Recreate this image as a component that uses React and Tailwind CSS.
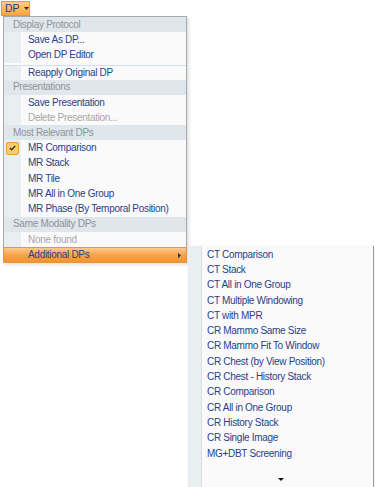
import React from "react";

const font = { fontFamily: '"Liberation Sans", Arial, sans-serif' };

const Header = ({ children }) => (
  <div className="h-[15px] flex items-center pl-[9px] bg-[#dfe6ec] text-[#8f9398] text-[10px] tracking-[-0.3px] leading-none">
    {children}
  </div>
);

const Item = ({ children, disabled, checked, separator }) => (
  <div className={`relative h-[15.3px] flex items-center ${separator ? "border-t border-[#d3dfec]" : ""}`}>
    <div className="w-[17px] h-full bg-[#e9eef1] flex items-center justify-center shrink-0">
      {checked && (
        <div className="w-[13px] h-[13px] rounded-[2px] border border-[#e3a03c] bg-[#fccb74] flex items-center justify-center">
          <svg width="7" height="6" viewBox="0 0 7 6">
            <path d="M0.8 3 L2.6 4.8 L6.2 1" stroke="#3a3020" strokeWidth="1.4" fill="none" />
          </svg>
        </div>
      )}
    </div>
    <span className={`pl-[7px] text-[10px] tracking-[-0.3px] leading-none ${disabled ? "text-[#a6a8ab]" : "text-[#28408a]"}`}>
      {children}
    </span>
  </div>
);

const subItems = [
  "CT Comparison",
  "CT Stack",
  "CT All in One Group",
  "CT Multiple Windowing",
  "CT with MPR",
  "CR Mammo Same Size",
  "CR Mammo Fit To Window",
  "CR Chest (by View Position)",
  "CR Chest - History Stack",
  "CR Comparison",
  "CR All in One Group",
  "CR History Stack",
  "CR Single Image",
  "MG+DBT Screening",
];

export default function App() {
  return (
    <div className="relative w-[375px] h-[487px] bg-white overflow-hidden" style={font}>
      <div className="ml-[1px] mt-[1px] w-[29px] h-[15px] flex items-center gap-[4px] pl-[3px] bg-gradient-to-b from-[#fccf85] to-[#f7a43c] border border-[#e89a3a] text-[#1f3a7a] text-[10.5px] leading-none">
        <span>DP</span>
        <svg width="5" height="3" viewBox="0 0 5 3">
          <path d="M0 0 H5 L2.5 3 Z" fill="#1f2f5a" />
        </svg>
      </div>

      <div className="ml-[3px] w-[184px] bg-[#fafafa] border border-[#a5a8ac] border-b-0 shadow-[2px_2px_3px_rgba(0,0,0,0.12)]">
        <Header>Display Protocol</Header>
        <Item>Save As DP...</Item>
        <Item>Open DP Editor</Item>
        <div className="h-[2px]" />
        <Item separator>Reapply Original DP</Item>
        <Header>Presentations</Header>
        <Item>Save Presentation</Item>
        <Item disabled>Delete Presentation...</Item>
        <Header>Most Relevant DPs</Header>
        <Item checked>MR Comparison</Item>
        <Item>MR Stack</Item>
        <Item>MR Tile</Item>
        <Item>MR All in One Group</Item>
        <Item>MR Phase (By Temporal Position)</Item>
        <Header>Same Modality DPs</Header>
        <Item disabled>None found</Item>
        <div className="h-[16px] flex items-center justify-between bg-gradient-to-b from-[#fdc98a] via-[#f9a24a] to-[#f7932c] border border-[#dd9a46] -mx-[1px]">
          <span className="pl-[24px] text-[10px] tracking-[-0.3px] leading-none text-[#28408a]">Additional DPs</span>
          <svg width="3" height="5" viewBox="0 0 3 5" className="mr-[5px]">
            <path d="M0 0 L3 2.5 L0 5 Z" fill="#1f2f5a" />
          </svg>
        </div>
      </div>

      <div className="absolute left-[188px] top-[246px] w-[186px] h-[242px] bg-[#fafafa] border-r border-[#9a9da1] shadow-[1px_1px_3px_rgba(0,0,0,0.1)] flex">
        <div className="w-[14px] bg-[#e9eef1] border-r border-[#d9dee2] shrink-0" />
        <div className="flex-1 flex flex-col pt-[1px]">
          {subItems.map((s) => (
            <div key={s} className="h-[15.3px] flex items-center pl-[5px] text-[10px] tracking-[-0.3px] leading-none text-[#28408a]">
              {s}
            </div>
          ))}
          <div className="flex-1" />
          <div className="h-[18px] flex items-center justify-center pr-[14px]">
            <svg width="6" height="3" viewBox="0 0 6 3">
              <path d="M0 0 H6 L3 3 Z" fill="#111" />
            </svg>
          </div>
        </div>
      </div>
    </div>
  );
}
